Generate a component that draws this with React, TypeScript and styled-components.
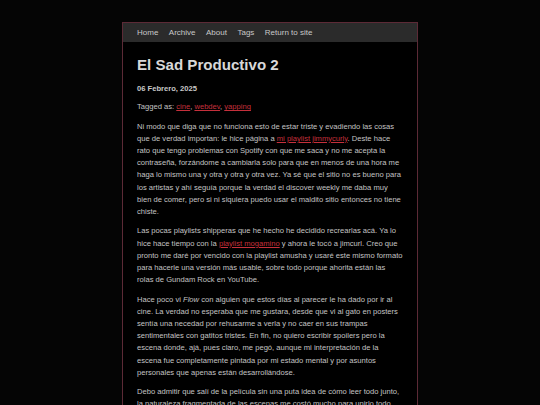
import React from 'react';
import styled, { createGlobalStyle } from 'styled-components';

const GlobalStyle = createGlobalStyle`
  html, body {
    margin: 0;
    padding: 0;
    background: #050505;
  }
  body {
    font-family: "Liberation Sans", Arial, sans-serif;
    overflow: hidden;
  }
`;

const Page = styled.div`
  display: flex;
  justify-content: center;
  padding-top: 22px;
  height: 405px;
  box-sizing: border-box;
`;

const Wrapper = styled.div`
  width: 296px;
  box-sizing: border-box;
  border: 1px solid #5c2a36;
  border-bottom: none;
  background: #000;
`;

const Nav = styled.nav`
  display: flex;
  align-items: center;
  height: 19px;
  background: #2b2b2b;
  padding: 0 14px;
  gap: 10.5px;
`;

const NavLink = styled.a`
  color: #c8c8c8;
  font-size: 8px;
  text-decoration: none;
`;

const Content = styled.main`
  padding: 13px 13.5px 0 14px;
  color: #c4c4c4;
  font-size: 7.6px;
  line-height: 12.2px;
`;

const Title = styled.h1`
  font-size: 15.1px;
  font-weight: bold;
  color: #d8d8d8;
  margin: 0 0 8px;
  line-height: 20px;
`;

const PostDate = styled.p`
  font-weight: bold;
  margin: 0 0 6px;
  color: #c8c8c8;
`;

const Paragraph = styled.p`
  margin: 0 0 7.2px;
`;

const Link = styled.a`
  color: #c6303c;
  text-decoration: underline;
`;

const App = () => (
  <>
    <GlobalStyle />
    <Page>
      <Wrapper>
        <Nav>
          <NavLink href="#">Home</NavLink>
          <NavLink href="#">Archive</NavLink>
          <NavLink href="#">About</NavLink>
          <NavLink href="#">Tags</NavLink>
          <NavLink href="#">Return to site</NavLink>
        </Nav>
        <Content>
          <Title>El Sad Productivo 2</Title>
          <PostDate>06 Febrero, 2025</PostDate>
          <Paragraph>
            Tagged as: <Link href="#">cine</Link>, <Link href="#">webdev</Link>,{' '}
            <Link href="#">yapping</Link>
          </Paragraph>
          <Paragraph>
            Ni modo que diga que no funciona esto de estar triste y evadiendo las cosas
            que de verdad importan: le hice página a{' '}
            <Link href="#">mi playlist jimmycurly</Link>. Deste hace rato que tengo
            problemas con Spotify con que me saca y no me acepta la contraseña,
            forzándome a cambiarla solo para que en menos de una hora me haga lo mismo
            una y otra y otra y otra vez. Ya sé que el sitio no es bueno para los
            artistas y ahí seguía porque la verdad el discover weekly me daba muy bien
            de comer, pero si ni siquiera puedo usar el maldito sitio entonces no tiene
            chiste.
          </Paragraph>
          <Paragraph>
            Las pocas playlists shipperas que he hecho he decidido recrearlas acá. Ya lo
            hice hace tiempo con la <Link href="#">playlist mogamino</Link> y ahora le
            tocó a jimcurl. Creo que pronto me daré por vencido con la playlist amusha
            y usaré este mismo formato para hacerle una versión más usable, sobre todo
            porque ahorita están las rolas de Gundam Rock en YouTube.
          </Paragraph>
          <Paragraph>
            Hace poco vi <em>Flow</em> con alguien que estos días al parecer le ha dado
            por ir al cine. La verdad no esperaba que me gustara, desde que vi al gato
            en posters sentía una necedad por rehusarme a verla y no caer en sus
            trampas sentimentales con gatitos tristes. En fin, no quiero escribir
            spoilers pero la escena donde, ajá, pues claro, me pegó, aunque mi
            interpretación de la escena fue completamente pintada por mi estado mental
            y por asuntos personales que apenas están desarrollándose.
          </Paragraph>
          <Paragraph>
            Debo admitir que salí de la película sin una puta idea de cómo leer todo
            junto, la naturaleza fragmentada de las escenas me costó mucho para unirlo
            todo.
          </Paragraph>
        </Content>
      </Wrapper>
    </Page>
  </>
);

export default App;
